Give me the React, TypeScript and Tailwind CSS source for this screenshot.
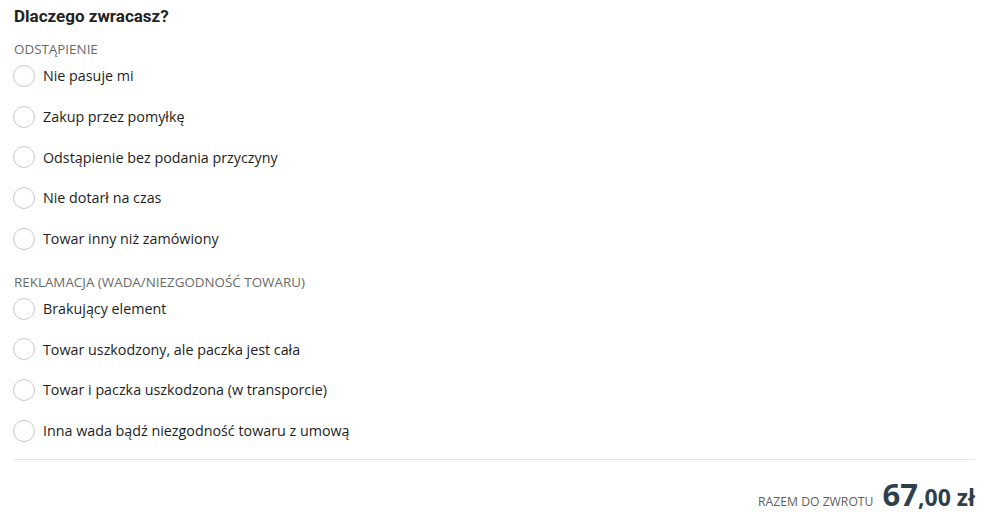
import React from "react";

const groups = [
  {
    label: "ODSTĄPIENIE",
    items: [
      "Nie pasuje mi",
      "Zakup przez pomyłkę",
      "Odstąpienie bez podania przyczyny",
      "Nie dotarł na czas",
      "Towar inny niż zamówiony",
    ],
  },
  {
    label: "REKLAMACJA (WADA/NIEZGODNOŚĆ TOWARU)",
    items: [
      "Brakujący element",
      "Towar uszkodzony, ale paczka jest cała",
      "Towar i paczka uszkodzona (w transporcie)",
      "Inna wada bądź niezgodność towaru z umową",
    ],
  },
];

export default function App() {
  return (
    <div className="w-[999px] h-[531px] bg-white pl-[14px] pr-[24px] pt-[5px]" style={{ fontFamily: '"Open Sans", sans-serif' }}>
      <h2 className="text-[17px] leading-[22px] font-bold text-[#222]" style={{ fontFamily: 'Roboto, sans-serif' }}>
        Dlaczego zwracasz?
      </h2>
      <div className="mt-[14px] flex flex-col">
        {groups.map((g, gi) => (
          <div key={g.label} className={gi > 0 ? "mt-[14.6px]" : ""}>
            <div className="text-[13.4px] leading-[16px] text-[#6a6a6a] font-medium">{g.label}</div>
            <div className="flex flex-col mt-[-1.4px]">
              {g.items.map((it) => (
                <label key={it} className="flex items-center h-[40.7px] cursor-pointer">
                  <span className="w-[22px] h-[22px] rounded-full border border-[#c8c8c8] bg-white shrink-0 -ml-[1px]" />
                  <span className="ml-[8px] text-[14.3px] text-[#1e1e1e]">{it}</span>
                </label>
              ))}
            </div>
          </div>
        ))}
      </div>
      <div className="border-t border-[#e5e5e5] mt-[7.6px]" />
      <div className="flex justify-end items-baseline mt-[16px] text-[#2e3f4d]">
        <span className="text-[12.2px] text-[#5f5f5f] mr-[9px]">RAZEM DO ZWROTU</span>
        <span className="text-[31px] font-bold leading-[36px]">67</span>
        <span className="text-[23px] font-bold leading-[36px]">,00 zł</span>
      </div>
    </div>
  );
}
